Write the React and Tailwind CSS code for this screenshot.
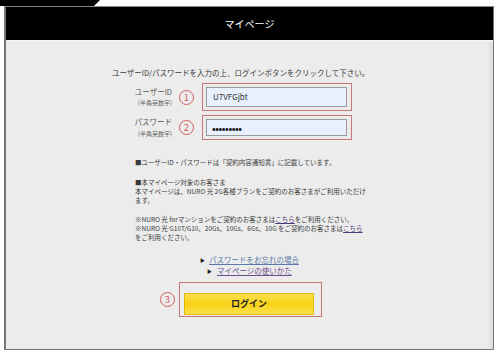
import React from 'react';

const Circle = ({ n }) => (
  <div className="w-[15px] h-[15px] rounded-full border border-[#d0605c] text-[#d0605c] text-[9.5px] leading-[13px] text-center shrink-0">
    {n}
  </div>
);

const App = () => {
  return (
    <div className="w-[500px] h-[355px] bg-white overflow-hidden font-['Noto_Sans_CJK_JP',sans-serif] text-[#3a3a3a]">
      {/* top strip */}
      <div className="h-[6px] w-[100px] bg-black [clip-path:polygon(0_0,100%_0,94%_100%,0_100%)]" />

      <div className="ml-[4px] w-[490px] border-l-2 border-r border-b border-[#777]">
        {/* header */}
        <div className="h-[34px] bg-black border-t border-[#888] flex items-center justify-center">
          <span className="text-white text-[10px] leading-none">マイページ</span>
        </div>

        {/* content */}
        <div className="h-[309px] bg-[#ececec] border-t-2 border-[#f4f4f4] shadow-[inset_-4px_0_3px_rgba(0,0,0,0.05)]">
          <p className="pt-[26px] ml-[106px] text-[7.5px] leading-[10px] whitespace-nowrap">
            ユーザーID/パスワードを入力の上、ログインボタンをクリックして下さい。
          </p>

          {/* user id */}
          <div className="mt-[5px] ml-[120px] flex items-center">
            <div className="w-[46px] text-right leading-none">
              <div className="text-[7.5px] text-[#555]">ユーザーID</div>
              <div className="text-[6px] mt-[5px] text-[#666]">(半角英数字)</div>
            </div>
            <div className="ml-[7px]"><Circle n="1" /></div>
            <div className="ml-[8px] w-[150px] h-[28px] border border-[#c77676] p-[3px] pr-[4px]">
              <div className="h-full bg-[#e8f0fe] border border-[#9a9a9a] flex items-center pl-[6px] text-[8px] text-[#333]">
                U7VFGjbt
              </div>
            </div>
          </div>

          {/* password */}
          <div className="mt-[4px] ml-[120px] flex items-center">
            <div className="w-[46px] text-right leading-none">
              <div className="text-[7.5px] text-[#555]">パスワード</div>
              <div className="text-[6px] mt-[5px] text-[#666]">(半角英数字)</div>
            </div>
            <div className="ml-[7px]"><Circle n="2" /></div>
            <div className="ml-[8px] w-[150px] h-[25px] border border-[#c77676] p-[3px] pr-[4px]">
              <div className="h-full bg-[#e8f0fe] border border-[#9a9a9a] flex items-center pl-[5px] text-[10px] font-bold tracking-[-0.5px] text-[#222]">
                •••••••••
              </div>
            </div>
          </div>

          {/* notes */}
          <div className="mt-[18px] ml-[129px] text-[6.5px] leading-[9px] whitespace-nowrap">
            <p>■ユーザーID・パスワードは「契約内容通知書」に記載しています。</p>
            <p className="mt-[11px]">■本マイページ対象のお客さま</p>
            <p>本マイページは、NURO 光 2G各種プランをご契約のお客さまがご利用いただけ</p>
            <p>ます。</p>
            <p className="mt-[10px]">
              ※NURO 光 forマンションをご契約のお客さまは<span className="underline text-[#4a3a7a]">こちら</span>をご利用ください。
            </p>
            <p>
              ※NURO 光 G10T/G10、20Gs、10Gs、6Gs、10G をご契約のお客さまは<span className="underline text-[#4a3a7a]">こちら</span>
            </p>
            <p>をご利用ください。</p>
          </div>

          {/* links */}
          <div className="mt-[12px] text-[7.5px] leading-[11px] whitespace-nowrap">
            <div className="ml-[194px] flex items-center">
              <span className="text-[5px] text-[#222] mr-[4px]">▶</span>
              <span className="underline text-[#5b78a8]">パスワードをお忘れの場合</span>
            </div>
            <div className="ml-[201px] flex items-center">
              <span className="text-[5px] text-[#222] mr-[5px]">▶</span>
              <span className="underline text-[#6a4f8c]">マイページの使いかた</span>
            </div>
          </div>

          {/* login */}
          <div className="mt-[6px] ml-[154px] flex items-center">
            <Circle n="3" />
            <div className="ml-[4px] w-[143px] h-[35px] border border-[#c77676] pl-[4px] pt-[5px] pr-[7px] pb-[6px]">
              <button className="w-full h-full bg-gradient-to-b from-[#fbe04a] via-[#f8d20c] to-[#fbe04a] border border-[#e0b800] text-[9px] font-bold text-[#222]">
                ログイン
              </button>
            </div>
          </div>
        </div>
      </div>
    </div>
  );
};

export default App;
